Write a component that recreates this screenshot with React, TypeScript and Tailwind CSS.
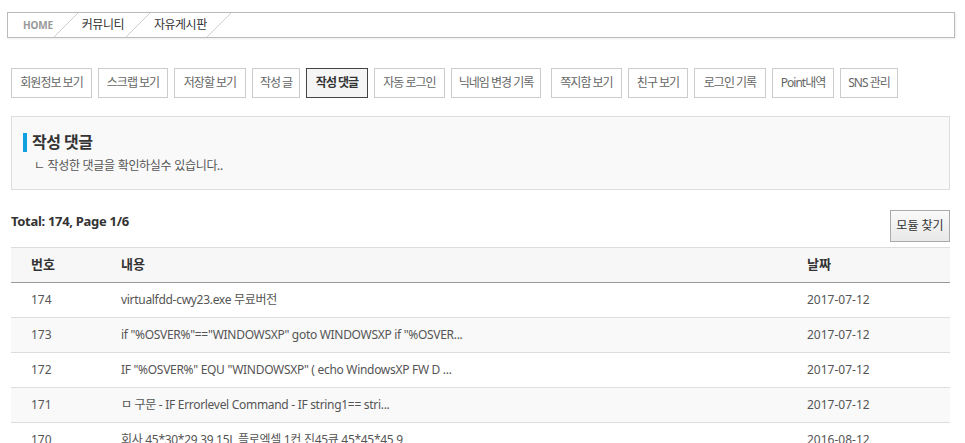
const tabs = [
  { label: "회원정보 보기", w: "w-[81px]" },
  { label: "스크랩 보기", w: "w-[70px]" },
  { label: "저장할 보기", w: "w-[72px]" },
  { label: "작성 글", w: "w-[48px]" },
  { label: "작성 댓글", w: "w-[62px]", active: true },
  { label: "자동 로그인", w: "w-[71px]" },
  { label: "닉네임 변경 기록", w: "w-[90px]" },
  { label: "쪽지함 보기", w: "w-[71px] ml-[4px]" },
  { label: "친구 보기", w: "w-[60px]" },
  { label: "로그인 기록", w: "w-[72px]" },
  { label: "Point내역", w: "w-[62px]" },
  { label: "SNS 관리", w: "w-[58px]" },
];

const rows = [
  { no: 174, text: "virtualfdd-cwy23.exe 무료버전", date: "2017-07-12" },
  { no: 173, text: 'if "%OSVER%"=="WINDOWSXP" goto WINDOWSXP if "%OSVER...', date: "2017-07-12" },
  { no: 172, text: 'IF "%OSVER%" EQU "WINDOWSXP" ( echo WindowsXP FW D ...', date: "2017-07-12" },
  { no: 171, text: "ㅁ 구문 - IF Errorlevel Command - IF string1== stri...", date: "2017-07-12" },
  { no: 170, text: "회사 45*30*29 39 15L 플로엑셀 1컨 진45큐 45*45*45 9", date: "2016-08-12" },
];

const Slash = () => (
  <svg width="24" height="24" viewBox="0 0 24 24" className="shrink-0">
    <line x1="0" y1="24" x2="24" y2="0" stroke="#cfcfcf" strokeWidth="1" />
  </svg>
);

export default function App() {
  return (
    <div className="min-h-screen bg-white font-['Noto_Sans','Noto_Sans_CJK_KR',sans-serif] text-[#333]">
      <div className="pt-[12px] pl-[7px] pr-[10px]">
        <nav className="flex h-[26px] items-center border border-[#bbb] bg-white pl-[15px] shadow-[1px_1px_2px_rgba(0,0,0,0.08)]">
          <span className="text-[10px] font-bold tracking-[-0.2px] text-[#999]">HOME</span>
          <span className="ml-[1px]"><Slash /></span>
          <span className="ml-[4px] text-[12px] leading-none tracking-[-0.5px] text-[#333]">커뮤니티</span>
          <span className="ml-[2px]"><Slash /></span>
          <span className="ml-[4px] text-[12px] leading-none tracking-[-0.5px] text-[#333]">자유게시판</span>
          <Slash />
        </nav>
      </div>

      <div className="pl-[11px] pr-[15px]">
        <div className="mt-[30px] flex gap-[6px]">
          {tabs.map((t) => (
            <div
              key={t.label}
              className={`${t.w} flex h-[30px] items-center justify-center whitespace-nowrap border text-[12px] tracking-[-1px] ${
                t.active
                  ? "border-[#444] bg-[#f5f5f5] font-bold text-[#333]"
                  : "border-[#ccc] bg-white text-[#666]"
              }`}
            >
              {t.label}
            </div>
          ))}
        </div>

        <section className="mt-[18px] h-[74px] border border-[#ddd] bg-[#f9f9f9] pl-[11px] pt-[16px]">
          <div className="flex items-center gap-[5px]">
            <span className="h-[19px] w-[4px] bg-[#12a0e0]" />
            <h2 className="text-[16px] font-bold leading-[19px] tracking-[-0.5px] text-[#333]">작성 댓글</h2>
          </div>
          <p className="mt-[6px] pl-[11px] text-[12px] leading-[16px] tracking-[-0.3px] text-[#555]">
            ㄴ 작성한 댓글을 확인하실수 있습니다..
          </p>
        </section>

        <div className="mt-[20px] flex items-start justify-between">
          <span className="mt-[3px] text-[13px] font-bold leading-[16px] tracking-[-0.3px] text-[#333]">
            Total: 174, Page 1/6
          </span>
          <button className="h-[32px] w-[60px] border border-[#aaa] bg-gradient-to-b from-[#fafafa] to-[#e8e8e8] text-[12px] text-[#333]">
            모듈 찾기
          </button>
        </div>

        <table className="mt-[5px] w-full border-collapse text-left">
          <thead>
            <tr className="h-[35px] border-t border-b border-t-[#ddd] border-b-[#999] bg-[#f7f7f7]">
              <th className="w-[90px] pl-[20px] text-[13px] font-bold text-[#333]">번호</th>
              <th className="pl-[20px] text-[13px] font-bold text-[#333]">내용</th>
              <th className="w-[163px] pl-[20px] text-[13px] font-bold text-[#333]">날짜</th>
            </tr>
          </thead>
          <tbody>
            {rows.map((r, i) => (
              <tr key={r.no} className={`h-[35px] border-b border-[#ddd] ${i % 2 === 1 ? "bg-[#f9f9f9]" : "bg-white"}`}>
                <td className="pl-[20px] text-[12px] text-[#555]">{r.no}</td>
                <td className="pl-[20px] text-[12px] tracking-[-0.3px] text-[#555]">{r.text}</td>
                <td className="pl-[20px] text-[12px] text-[#555]">{r.date}</td>
              </tr>
            ))}
          </tbody>
        </table>
      </div>
    </div>
  );
}
